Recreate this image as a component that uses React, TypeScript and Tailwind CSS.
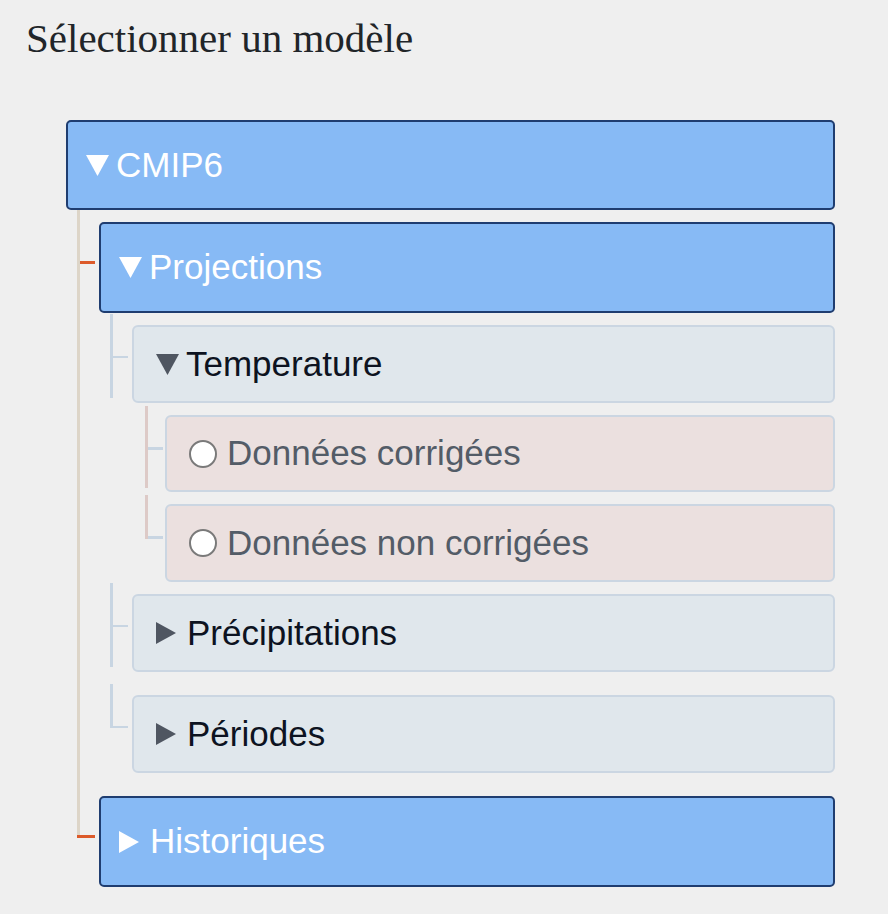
import React from 'react';

type Tone = 'blue' | 'gray' | 'pink';

const boxTone: Record<Tone, string> = {
  blue: 'border-[#1f3d70] bg-[#87baf5] text-white rounded-[5px] pl-[18px]',
  gray: 'border-[#cbd6e2] bg-[#e0e7ec] text-[#0d1321] rounded-[6px] pl-[22px]',
  pink: 'border-[#cbd6e2] bg-[#ebe0df] text-[#535c67] rounded-[6px] pl-[22px]',
};

function Down({ color }: { color: string }) {
  return (
    <svg width="23" height="21" viewBox="0 0 23 21" className="mr-[7px] shrink-0">
      <polygon points="0,0 23,0 11.5,21" fill={color} />
    </svg>
  );
}

function Right({ color }: { color: string }) {
  return (
    <svg width="20" height="22" viewBox="0 0 20 22" className="mr-[11px] shrink-0">
      <polygon points="0,0 20,11 0,22" fill={color} />
    </svg>
  );
}

function Radio() {
  return <span className="mr-[10px] h-[28px] w-[28px] shrink-0 rounded-full border-2 border-[#7a7a7a] bg-white" />;
}

function NodeBox({ tone, h, icon, label }: { tone: Tone; h: string; icon: React.ReactNode; label: string }) {
  return (
    <div className={`flex items-center border-2 text-[35px] ${h} ${boxTone[tone]}`}>
      {icon}
      <span>{label}</span>
    </div>
  );
}

// tree connectors, one gutter per child row (line segments laid out in a column)
function Gutter({ pad, top, mid, bottom }: { pad: string; top: React.ReactNode; mid: React.ReactNode; bottom?: React.ReactNode }) {
  return (
    <div className={`flex w-[33px] shrink-0 flex-col ${pad}`}>
      {top}
      {mid}
      {bottom}
    </div>
  );
}

const Row = ({ gutter, children, pb = '' }: { gutter: React.ReactNode; children: React.ReactNode; pb?: string }) => (
  <div className="flex">
    {gutter}
    <div className={`min-w-0 flex-1 pt-[12px] ${pb}`}>{children}</div>
  </div>
);

// level 2 gutter (children of Projections)
const blueGutter = (last: boolean) => (
  <Gutter
    pad="pl-[11px] pt-[1px]"
    top={<span className="h-[42px] w-[3px] bg-[#c8d5e2]" />}
    mid={
      <span className="flex h-[2px]">
        <span className="w-[3px] bg-[#c8d5e2]" />
        <span className="w-[15px] bg-[#c8d5e2]" />
      </span>
    }
    bottom={last ? null : <span className="h-[40px] w-[3px] bg-[#c8d5e2]" />}
  />
);

// level 3 gutter (children of Temperature)
const pinkGutter = (last: boolean) => (
  <Gutter
    pad="pl-[13px] pt-[3px]"
    top={<span className="h-[41px] w-[3px] bg-[#ddcac7]" />}
    mid={
      <span className="flex h-[3px]">
        <span className="w-[3px] bg-[#ddcac7]" />
        <span className="w-[15px] bg-[#c8d5e2]" />
      </span>
    }
    bottom={last ? null : <span className="h-[38px] w-[3px] bg-[#ddcac7]" />}
  />
);

export default function App() {
  return (
    <div className="min-h-screen bg-[#efefef] font-['Liberation_Sans',Arial,sans-serif]">
      <h1 className="pl-[26px] pt-[14px] font-['Liberation_Serif','Times_New_Roman',serif] text-[41px] leading-[48px] text-[#212529]">
        Sélectionner un modèle
      </h1>

      <div className="ml-[66px] mr-[53px] mt-[58px]">
        <NodeBox tone="blue" h="h-[90px]" icon={<Down color="#ffffff" />} label="CMIP6" />

        <Row
          gutter={
            <Gutter
              pad="pl-[11px]"
              top={<span className="h-[51px] w-[3px] bg-[#ddd5c8]" />}
              mid={
                <span className="flex h-[3px]">
                  <span className="w-[3px] bg-[#ddd5c8]" />
                  <span className="w-[15px] bg-[#dc5a2a]" />
                </span>
              }
              bottom={<span className="w-[3px] flex-1 bg-[#ddd5c8]" />}
            />
          }
        >
          <NodeBox tone="blue" h="h-[91px]" icon={<Down color="#ffffff" />} label="Projections" />

          <Row gutter={blueGutter(false)}>
            <NodeBox tone="gray" h="h-[78px]" icon={<Down color="#4f5661" />} label="Temperature" />
            <Row gutter={pinkGutter(false)}>
              <NodeBox tone="pink" h="h-[77px]" icon={<Radio />} label="Données corrigées" />
            </Row>
            <Row gutter={pinkGutter(true)}>
              <NodeBox tone="pink" h="h-[78px]" icon={<Radio />} label="Données non corrigées" />
            </Row>
          </Row>

          <Row gutter={blueGutter(false)} pb="pb-[11px]">
            <NodeBox tone="gray" h="h-[78px]" icon={<Right color="#4f5661" />} label="Précipitations" />
          </Row>

          <Row gutter={blueGutter(true)} pb="pb-[11px]">
            <NodeBox tone="gray" h="h-[78px]" icon={<Right color="#4f5661" />} label="Périodes" />
          </Row>
        </Row>

        <Row
          gutter={
            <Gutter
              pad="pl-[11px]"
              top={<span className="h-[51px] w-[3px] bg-[#ddd5c8]" />}
              mid={<span className="h-[3px] w-[18px] bg-[#dc5a2a]" />}
            />
          }
        >
          <NodeBox tone="blue" h="h-[91px]" icon={<Right color="#ffffff" />} label="Historiques" />
        </Row>
      </div>
    </div>
  );
}
